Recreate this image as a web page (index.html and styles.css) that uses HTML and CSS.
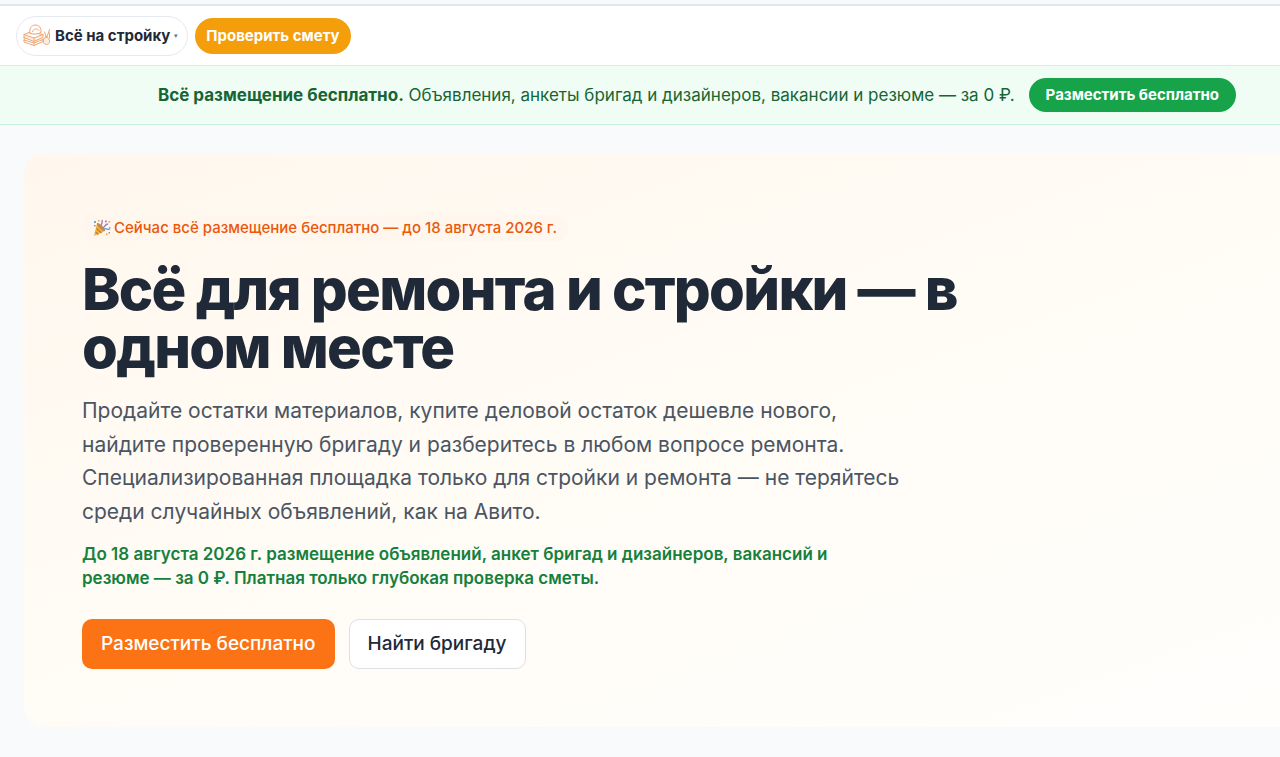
FILE: index.html
```html
<!DOCTYPE html>
<html lang="ru">
<head>
  <meta charset="UTF-8">
  <meta name="viewport" content="width=device-width, initial-scale=1.0">
  <title>Всё на стройку</title>
  <link rel="stylesheet" href="styles.css">
</head>
<body>
  <header class="header">
    <button class="brand" type="button">
      <svg class="brand-logo" viewBox="0 0 28 24" fill="none" stroke="#f0a572" stroke-width="1" stroke-linejoin="round" stroke-linecap="round" aria-hidden="true">
        <path d="M1 13.500v-3l6-2.500 13 2.500v3l-9 4-10-4zM1 10.500l10 3.500 9-3.500M11 14v3.500" fill="#fdeee2"/>
        <path d="M2 14.500l-1 1.500v2l10 3.500 9-4V15M11 21.500V19l9-3.500M1 16l10 3" fill="none"/>
        <path d="M7 9C6 5 8 1.500 12 1c4-.2 6.500 3 6 7.300-3 2-8 2.500-11 .7z" fill="#fff"/>
        <path d="M9.500 7.500c1-3 5-3.500 6.500-1"/>
        <path d="M22.500 13c-2 1-2.500 3.500-2 5.500.8 2.500 5.200 2.500 6 0 .5-2.500-1-5.500-4-5.500zM21.500 8l2 5M26.500 5.500L24 13M26.500 9v5" fill="#fdeee2"/>
      </svg>
      <span>Всё на стройку</span>
      <span class="brand-arrow">▾</span>
    </button>
    <a class="pill pill-amber" href="#">Проверить смету</a>
  </header>

  <div class="promo">
    <p class="promo-text"><strong>Всё размещение бесплатно.</strong> Объявления, анкеты бригад и дизайнеров, вакансии и резюме — за 0 ₽.</p>
    <a class="pill pill-green" href="#">Разместить бесплатно</a>
  </div>

  <main class="page">
    <section class="hero">
      <div class="hero-badge">
        <svg class="hero-badge-icon" viewBox="0 0 18 18" aria-hidden="true">
          <path d="M1 17L4 4c3 1 8 5 8 8z" fill="#f0b440"/>
          <path d="M3.500 9.500l5 4.500M2.500 13l3 2.500" stroke="#c9792c" stroke-width="1.200"/>
          <path d="M4 4c2-1 9 6 8 8-2 1-9-5-8-8z" fill="#c48b50"/>
          <path d="M8 7c0-2 2-3 1-6M10 9c2-1 2-4 5-4" stroke="#9c7cc8" stroke-width="1.400" fill="none"/>
          <path d="M11 10c2-1 3 1 6 0" stroke="#6fa9db" stroke-width="1.400" fill="none"/>
          <path d="M1 2h2v2H1zM16 8h1.500v1.500H16z" fill="#6fa9db"/>
          <path d="M12 1.500h1.800v1.800H12zM15.500 13h1.500v1.500h-1.500z" fill="#e0708c"/>
          <path d="M15.500 2h1.600v1.600h-1.600zM5 1h1.400v1.500H5zM13 14.500h1.500V16H13z" fill="#e9a63c"/>
          <path d="M1 6h1.500v1.500H1z" fill="#9c7cc8"/>
        </svg>
        <span>Сейчас всё размещение бесплатно — до 18 августа 2026 г.</span>
      </div>
      <h1 class="hero-title">Всё для ремонта и стройки — в одном месте</h1>
      <p class="hero-lead">Продайте остатки материалов, купите деловой остаток дешевле нового, найдите проверенную бригаду и разберитесь в любом вопросе ремонта. Специализированная площадка только для стройки и ремонта — не теряйтесь среди случайных объявлений, как на Авито.</p>
      <p class="hero-note">До 18 августа 2026 г. размещение объявлений, анкет бригад и дизайнеров, вакансий и резюме — за 0 ₽. Платная только глубокая проверка сметы.</p>
      <div class="hero-actions">
        <a class="btn btn-primary" href="#">Разместить бесплатно</a>
        <a class="btn btn-outline" href="#">Найти бригаду</a>
      </div>
    </section>
  </main>
</body>
</html>
```

FILE: styles.css
```css
* {
  box-sizing: border-box;
}

body {
  margin: 0;
  font-family: Inter, "Noto Sans", sans-serif;
  background: #f8fafc;
  color: #1f2937;
  border-top: 4px solid #f8f9fd;
}

a {
  text-decoration: none;
}

.header {
  display: flex;
  align-items: center;
  gap: 7px;
  padding: 10px 16px 9px;
  background: #fff;
  border-top: 2px solid #e3e5ec;
  border-bottom: 1px solid #e2e8e8;
}

.brand {
  display: flex;
  align-items: center;
  gap: 4px;
  height: 40px;
  padding: 0 9px 0 6px;
  font: 700 15px/20px Inter, "Noto Sans", sans-serif;
  color: #1f2937;
  background: #fff;
  border: 1px solid #e5e9f0;
  border-radius: 20px;
}

.brand-logo {
  width: 28px;
  height: 24px;
}

.brand-arrow {
  font-size: 7px;
  font-weight: 400;
  color: #64748b;
}

.pill {
  font-size: 15px;
  font-weight: 700;
  line-height: 20px;
  color: #fff;
  border-radius: 18px;
  white-space: nowrap;
}

.pill-amber {
  padding: 8px 11px;
  background: #f59e0b;
}

.pill-green {
  padding: 7px 17px;
  background: #16a34a;
}

.promo {
  display: flex;
  align-items: center;
  justify-content: center;
  gap: 14px;
  padding: 12px 0 12px 114px;
  background: #f0fdf4;
  border-bottom: 1px solid #c8f2e0;
}

.promo-text {
  margin: 0;
  font-size: 17px;
  line-height: 24px;
  color: #166534;
  white-space: nowrap;
}

.page {
  padding: 28px 0 30px 24px;
}

.hero {
  padding: 62px 58px 58px;
  background: linear-gradient(160deg, #fff7ed 0%, #fffcf6 50%, #fffefc 100%);
  border-radius: 20px 0 0 20px;
}

.hero-badge {
  display: inline-flex;
  align-items: center;
  gap: 3px;
  padding: 2px 11px;
  font-size: 15px;
  font-weight: 500;
  line-height: 22px;
  color: #ea580c;
  background: #fff6ed;
  border-radius: 12px;
}

.hero-badge-icon {
  width: 18px;
  height: 18px;
}

.hero-title {
  max-width: 900px;
  margin: 19px 0 18px;
  font-size: 58px;
  font-weight: 800;
  line-height: 58px;
  letter-spacing: -0.03em;
}

.hero-lead {
  max-width: 822px;
  margin: 0 0 14px;
  font-size: 21px;
  line-height: 1.6;
  color: #4b5563;
}

.hero-note {
  max-width: 806px;
  margin: 0 0 29px;
  font-size: 17px;
  font-weight: 600;
  line-height: 24px;
  color: #15803d;
}

.hero-actions {
  display: flex;
  gap: 14px;
}

.btn {
  padding: 12px 18px;
  font-size: 19px;
  font-weight: 500;
  line-height: 24px;
  border: 1px solid transparent;
  border-radius: 10px;
}

.btn-primary {
  color: #fff;
  background: #fb7315;
}

.btn-outline {
  color: #1f2937;
  background: #fff;
  border-color: #dcdfe6;
}
```
